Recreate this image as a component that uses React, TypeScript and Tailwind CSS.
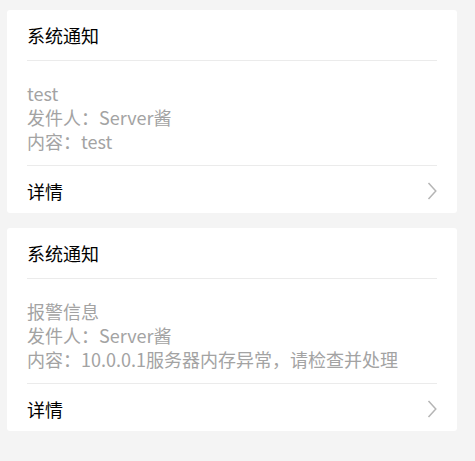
const notices = [
  { title: '系统通知', subject: 'test', sender: 'Server酱', content: 'test' },
  { title: '系统通知', subject: '报警信息', sender: 'Server酱', content: '10.0.0.1服务器内存异常，请检查并处理' },
];

function Chevron() {
  return (
    <svg width="10" height="18" viewBox="0 0 10 18" fill="none">
      <path d="M1.5 1 L8.8 9 L1.5 17" stroke="#b5b5b5" strokeWidth="1.5" />
    </svg>
  );
}

function NoticeCard({ title, subject, sender, content }: (typeof notices)[number]) {
  return (
    <div className="w-[450px] rounded-[3px] bg-white px-5">
      <div className="flex h-[50px] items-center text-[18px] leading-6 text-black">{title}</div>
      <div className="border-t border-[#ebebeb] pt-5 pb-3 text-[18px] leading-6 text-[#a3a3a3]">
        <div>{subject}</div>
        <div>发件人：{sender}</div>
        <div>内容：{content}</div>
      </div>
      <div className="flex items-center justify-between border-t border-[#ebebeb] pt-[13px] pb-[10px]">
        <span className="text-[18px] leading-6 text-black">详情</span>
        <Chevron />
      </div>
    </div>
  );
}

export default function App() {
  return (
    <div
      className="min-h-screen bg-[#f4f4f4] pt-[10px] pl-[7px]"
      style={{ fontFamily: '"Noto Sans CJK SC", "Noto Sans", sans-serif' }}
    >
      <div className="flex flex-col gap-[15px]">
        {notices.map((n, i) => (
          <NoticeCard key={i} {...n} />
        ))}
      </div>
    </div>
  );
}
